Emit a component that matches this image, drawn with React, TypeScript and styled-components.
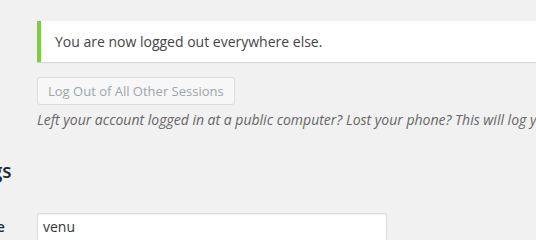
import styled, { createGlobalStyle } from "styled-components";

const GlobalStyle = createGlobalStyle`
  html, body {
    margin: 0;
    padding: 0;
    background: #f1f1f1;
    font-family: "Open Sans", "Liberation Sans", sans-serif;
    color: #444;
    overflow: hidden;
  }
`;

const Page = styled.div`
  width: 536px;
  height: 240px;
  overflow: hidden;
`;

const Wrap = styled.div`
  margin-left: -65px;
  padding-top: 21px;
`;

const SessionsBlock = styled.div`
  margin-left: 102px;
`;

const Notice = styled.div`
  background: #fff;
  border-left: 4px solid #7ad03a;
  box-shadow: 0 1px 1px rgba(0, 0, 0, 0.1);
  padding: 1px 12px;
  width: 600px;

  & p {
    margin: 0.5em 0;
    padding: 2px;
    font-size: 14px;
    line-height: 1.5;
    color: #444;
    white-space: nowrap;
  }
`;

const Button = styled.button`
  display: inline-block;
  margin-top: 15px;
  height: 28px;
  padding: 0 10px 1px;
  font-family: inherit;
  font-size: 13px;
  line-height: 26px;
  color: #a0a5aa;
  background: #f7f7f7;
  border: 1px solid #ddd;
  border-radius: 3px;
  box-sizing: border-box;
  cursor: default;
`;

const Description = styled.p`
  margin: 4px 0 0;
  font-size: 14px;
  font-style: italic;
  line-height: 1.5;
  color: #666;
  white-space: nowrap;
`;

const Heading = styled.h2`
  margin: 27.5px 0 0 3px;
  font-size: 19px;
  font-weight: 600;
  line-height: 1.4;
  color: #23282d;
`;

const FormRow = styled.div`
  display: grid;
  grid-template-columns: 102px 1fr;
  align-items: center;
  margin-top: 28.6px;
`;

const Label = styled.label`
  font-size: 14px;
  font-weight: 600;
  color: #23282d;
`;

const Input = styled.input`
  width: 350px;
  height: 28px;
  box-sizing: border-box;
  padding: 3px 5px;
  font-family: inherit;
  font-size: 14px;
  color: #32373c;
  background: #fff;
  border: 1px solid #ddd;
  box-shadow: inset 0 1px 2px rgba(0, 0, 0, 0.07);
  outline: none;
`;

export default function App() {
  return (
    <>
      <GlobalStyle />
      <Page>
        <Wrap>
          <SessionsBlock>
            <Notice>
              <p>You are now logged out everywhere else.</p>
            </Notice>
            <Button disabled>Log Out of All Other Sessions</Button>
            <Description>
              Left your account logged in at a public computer? Lost your phone? This will log you out everywhere except your current browser.
            </Description>
          </SessionsBlock>
          <Heading>Settings</Heading>
          <FormRow>
            <Label htmlFor="user_login">Username</Label>
            <Input id="user_login" defaultValue="venu" />
          </FormRow>
        </Wrap>
      </Page>
    </>
  );
}
